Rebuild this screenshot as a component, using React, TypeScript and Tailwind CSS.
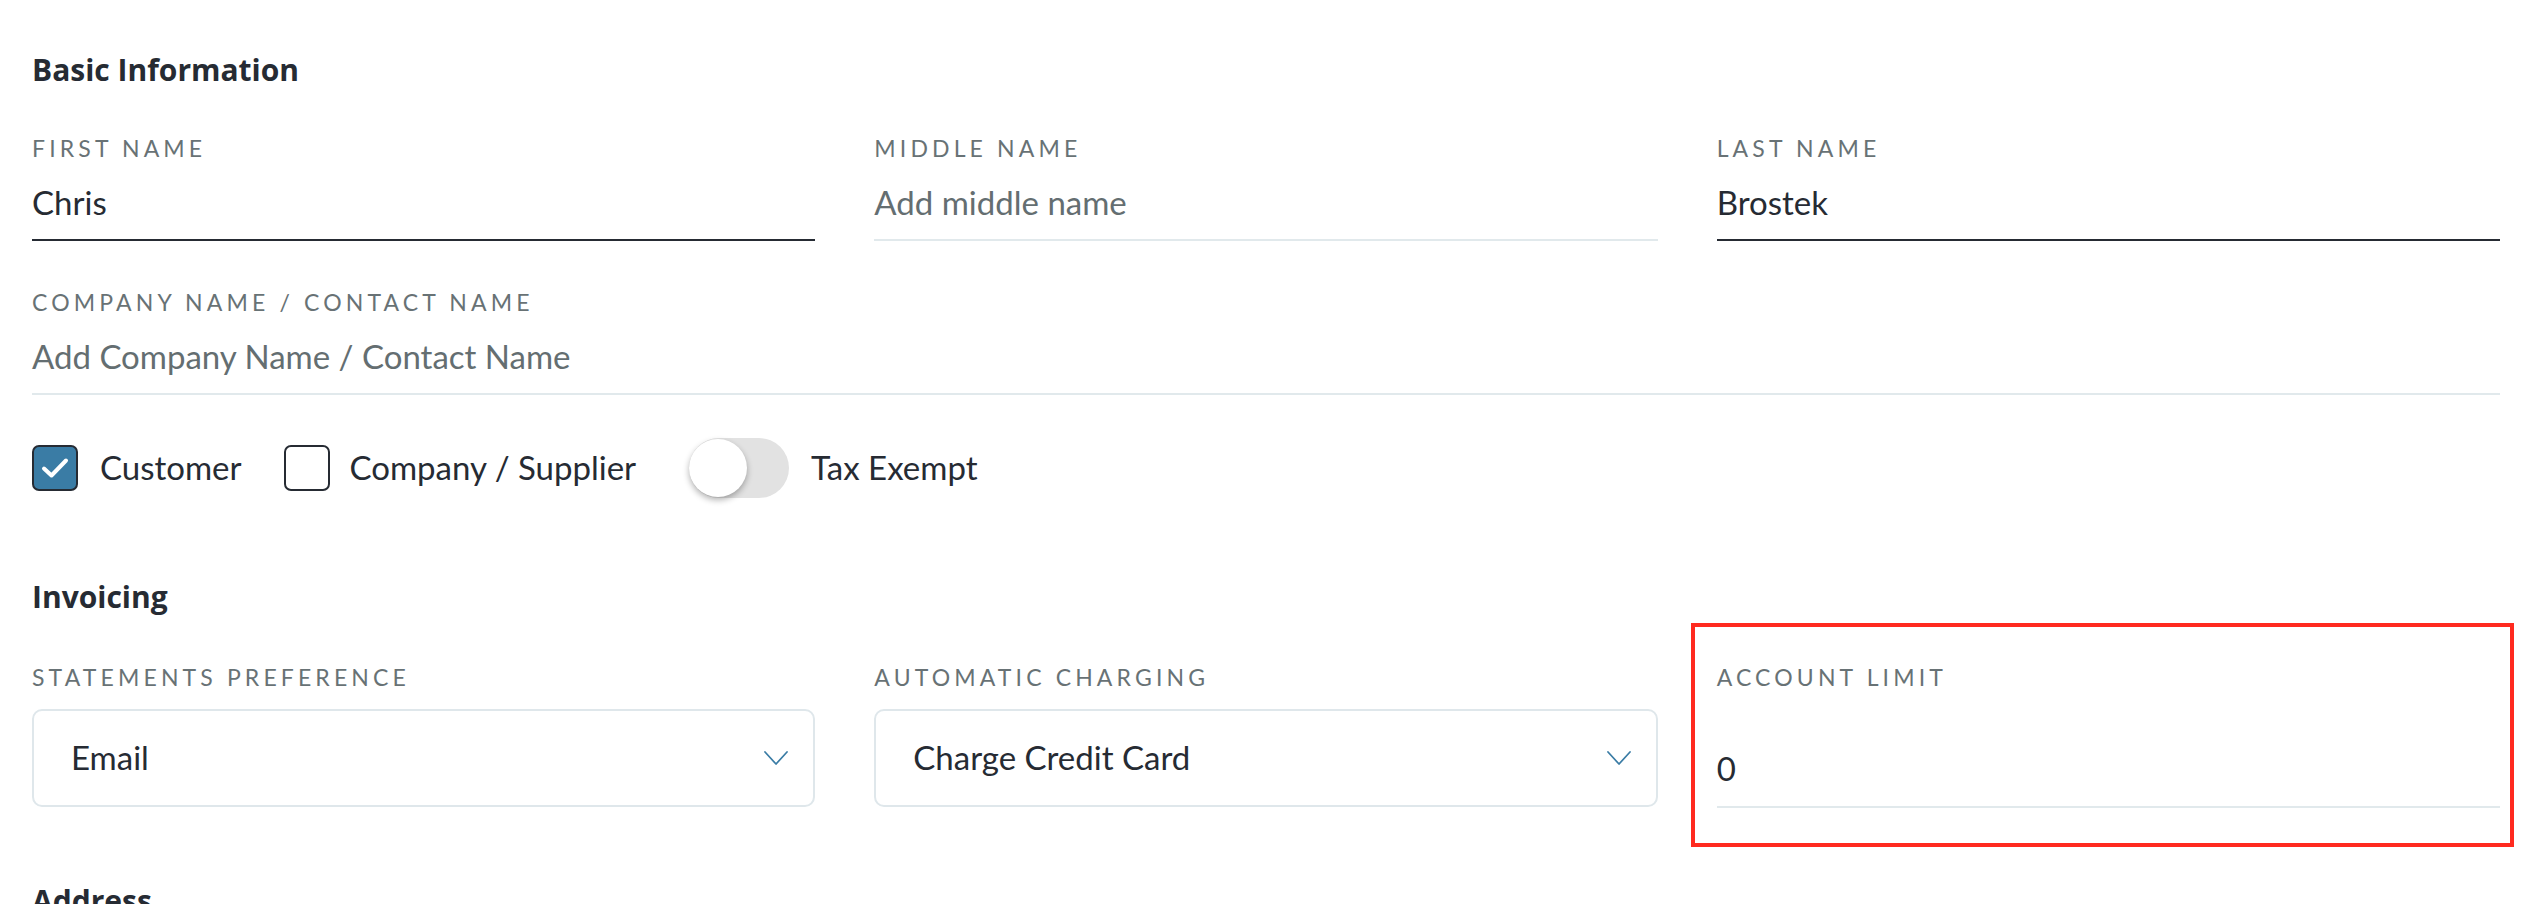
import type { ReactNode } from "react";

const font = { fontFamily: "Lato, 'Open Sans', sans-serif" };

const Heading = ({ children, className = "" }: { children: ReactNode; className?: string }) => (
  <h2
    className={`font-['Open_Sans',sans-serif] text-[30px] font-bold leading-[36px] text-[#262b33] ${className}`}
  >
    {children}
  </h2>
);

const Label = ({ children }: { children: ReactNode }) => (
  <div className="text-[23px] uppercase leading-[28px] tracking-[0.18em] text-[#687275]">{children}</div>
);

const TextField = ({
  label,
  value,
  placeholder,
  filled,
}: {
  label: string;
  value?: string;
  placeholder?: string;
  filled?: boolean;
}) => (
  <div>
    <Label>{label}</Label>
    <div
      className={`mt-[16px] border-b-2 pb-[13px] text-[33px] leading-[48px] ${
        filled ? "border-[#262b33]" : "border-[#e1e9ec]"
      }`}
    >
      {value ? (
        <span className="text-[#262b33]">{value}</span>
      ) : (
        <span className="text-[#646e71]">{placeholder}</span>
      )}
    </div>
  </div>
);

const Chevron = () => (
  <svg width="26" height="16" viewBox="0 0 26 16" fill="none">
    <path d="M2 2 L13 14 L24 2" stroke="#3a7ca5" strokeWidth="1.75" strokeLinecap="round" strokeLinejoin="round" />
  </svg>
);

const Select = ({ label, value }: { label: string; value: string }) => (
  <div>
    <Label>{label}</Label>
    <div className="mt-[18px] flex h-[98px] items-center justify-between rounded-[10px] border-2 border-[#dfe7eb] pl-[37px] pr-[24px]">
      <span className="text-[33px] text-[#262b33]">{value}</span>
      <Chevron />
    </div>
  </div>
);

const Checkbox = ({ checked }: { checked?: boolean }) => (
  <div
    className={`flex h-[46px] w-[46px] items-center justify-center rounded-[7px] border-2 border-[#262b33] ${
      checked ? "bg-[#3a7ca5]" : "bg-white"
    }`}
  >
    {checked && (
      <svg width="30" height="24" viewBox="0 0 30 24" fill="none">
        <path d="M4 12.5 L11.5 19.5 L26 4.5" stroke="white" strokeWidth="4" strokeLinecap="round" strokeLinejoin="round" />
      </svg>
    )}
  </div>
);

export default function App() {
  return (
    <div className="min-h-screen bg-white pl-[32px] pr-[42px] pt-[52px] text-[#262b33]" style={font}>
      <Heading>Basic Information</Heading>

      <div className="mt-[46px] grid grid-cols-3 gap-x-[59px]">
        <TextField label="First Name" value="Chris" filled />
        <TextField label="Middle Name" placeholder="Add middle name" />
        <TextField label="Last Name" value="Brostek" filled />
      </div>

      <div className="mt-[47px]">
        <TextField label="Company Name / Contact Name" placeholder="Add Company Name / Contact Name" />
      </div>

      <div className="mt-[41px] flex h-[64px] items-center text-[33px] text-[#262b33]">
        <Checkbox checked />
        <span className="ml-[22px]">Customer</span>
        <div className="ml-[42px]">
          <Checkbox />
        </div>
        <span className="ml-[20px]">Company / Supplier</span>
        <div className="ml-[53px] flex h-[60px] w-[100px] items-center rounded-full bg-[#e2e2e2]">
          <div className="h-[58px] w-[58px] rounded-full bg-white shadow-[0_3px_6px_rgba(0,0,0,0.3)]" />
        </div>
        <span className="ml-[22px]">Tax Exempt</span>
      </div>

      <Heading className="mt-[79px]">Invoicing</Heading>

      <div className="mt-[48px] grid grid-cols-3 gap-x-[59px]">
        <Select label="Statements Preference" value="Email" />
        <Select label="Automatic Charging" value="Charge Credit Card" />
        <div className="relative">
          <Label>Account Limit</Label>
          <div className="mt-[53px] border-b-2 border-[#e1e9ec] pb-[14px] text-[33px] leading-[48px] text-[#262b33]">
            0
          </div>
          <div className="pointer-events-none absolute -bottom-[39px] -left-[26px] -right-[14px] -top-[40px] border-[4px] border-[#ff2a1f]" />
        </div>
      </div>

      <Heading className="mt-[75px]">Address</Heading>
    </div>
  );
}
